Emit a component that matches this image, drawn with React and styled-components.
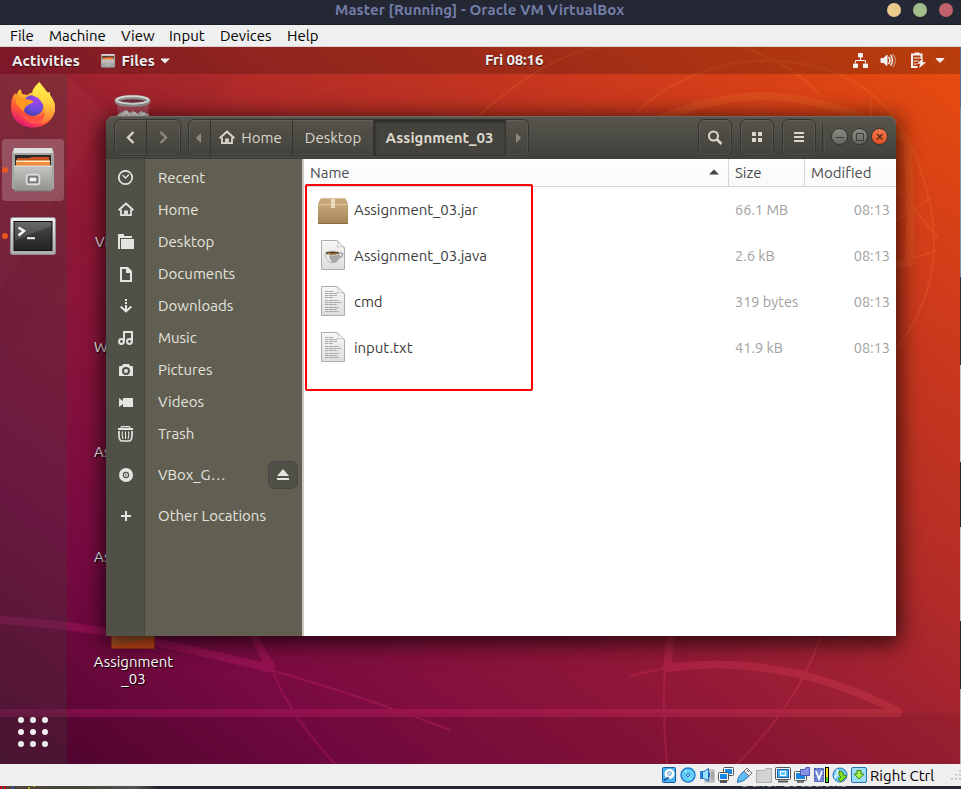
import React from "react";
import styled, { createGlobalStyle } from "styled-components";

const GlobalStyle = createGlobalStyle`
  * { box-sizing: border-box; }
  html, body { margin: 0; padding: 0; overflow: hidden; background: #242734; }
  body { font-family: Ubuntu, "Noto Sans", "Open Sans", sans-serif; font-size: 15px; }
  svg { display: block; flex: none; }
`;

const Screen = styled.div`
  width: 961px;
  height: 789px;
  display: flex;
  flex-direction: column;
  overflow: hidden;
`;

const TitleBar = styled.header`
  height: 25px;
  flex: none;
  display: grid;
  grid-template-columns: 335px 1fr auto;
  align-items: start;
  background: #242734;
  border-bottom: 1px solid #1b1d28;
`;

const TitleText = styled.div`
  grid-column: 2;
  line-height: 20px;
  font-weight: 700;
  font-size: 15px;
  letter-spacing: 0.06px;
  color: #727da8;
  white-space: nowrap;
`;

const TitleButtons = styled.div`
  display: flex;
  gap: 12px;
  padding: 3px 8px 0 0;
`;

const Dot = styled.span`
  width: 14px;
  height: 14px;
  border-radius: 50%;
  background: ${(p) => p.$color};
`;

const MenuBar = styled.nav`
  height: 22px;
  flex: none;
  display: grid;
  grid-template-columns: 39px 72px 48px 51px 67px 60px;
  padding-left: 10px;
  background: #efefef;
  border-bottom: 1px solid #d4d4d4;
`;

const MenuItem = styled.span`
  font-size: 15px;
  line-height: 22px;
  color: #000;
`;

const Middle = styled.div`
  display: flex;
  height: 717px;
  flex: none;
`;

const HostEdge = styled.div`
  width: 1px;
  background: linear-gradient(#4f6d96 0 60px, #7d8fb0 60px 230px, #2a2f3c 230px 318px, #c8c8c8 318px 415px, #242734 415px 480px, #c8c8c8 480px 574px, #242734 574px 642px, #b8b8b8 642px);
`;

const Desktop = styled.main`
  position: relative;
  width: 960px;
  height: 717px;
  display: grid;
  grid-template-rows: 27px 1fr;
  overflow: hidden;
  background: linear-gradient(to top right, #4c0530 0%, #5c0635 6%, #780a42 19%, #921837 41%, #9e2033 50%, #b22c27 61%, #cd3a1c 80%, #e94d0d 100%);
`;

const Wallpaper = styled.svg`
  position: absolute;
  inset: 0;
`;

const TopPanel = styled.div`
  position: relative;
  display: grid;
  grid-template-columns: 89px 396px 1fr auto;
  padding-left: 12px;
  background: rgba(0, 0, 0, 0.2);
  color: #f2f2f2;
  font-weight: 700;
  font-size: 15px;
  line-height: 28px;
  text-shadow: 0 1px 1px rgba(0, 0, 0, 0.6);
`;

const PanelText = styled.span`
  white-space: nowrap;
  letter-spacing: 0.12px;
`;

const PanelApp = styled.div`
  display: flex;
  align-items: center;
  gap: 6.5px;
`;

const PanelClock = styled.div`
  margin-left: -12px;
  letter-spacing: -0.15px;
  line-height: 26px;
`;

const Work = styled.div`
  position: relative;
  display: flex;
`;

const Dock = styled.aside`
  width: 67px;
  display: flex;
  flex-direction: column;
  background: rgba(70, 60, 60, 0.3);
  align-items: center;
  padding: 0 1px 17px 0;
`;

const DockItem = styled.div`
  position: relative;
  display: flex;
  align-items: center;
  justify-content: center;
  width: 62px;
  height: 62px;
  flex: none;
  margin-bottom: ${(p) => p.$gap || 0}px;
  border-radius: 4px;
  background: ${(p) => (p.$active ? "rgba(255,255,255,.2)" : "transparent")};
`;

const Running = styled.i`
  position: absolute;
  left: 0;
  top: 28px;
  width: 6px;
  height: 6px;
  border-radius: 50%;
  background: #e95420;
`;

const AppsGrid = styled.div`
  margin-top: auto;
  display: grid;
  grid-template-columns: repeat(3, 6px);
  gap: 6px;
`;

const AppDot = styled.i`
  width: 6px;
  height: 6px;
  border-radius: 50%;
  background: #f0f0f0;
`;

/* Desktop icons sit on the free desktop canvas behind the window. */
const DeskItem = styled.div`
  position: absolute;
  left: ${(p) => p.$x}px;
  top: ${(p) => p.$y}px;
  width: ${(p) => p.$w || 80}px;
  text-align: ${(p) => (p.$w ? "left" : "center")};
  font-size: 15px;
  line-height: 17px;
  color: #fff;
  text-shadow: 1px 1px 1px #000;
`;

const Window = styled.section`
  position: absolute;
  left: 106px;
  top: 42px;
  width: 790px;
  height: 520px;
  display: grid;
  grid-template-rows: 43px 1fr;
  border-radius: 8px 8px 0 0;
  box-shadow: 0 4px 22px 3px rgba(0, 0, 0, 0.72);
`;

const HeaderBar = styled.div`
  display: flex;
  padding: 3px 8.5px 4px 8px;
  border-radius: 8px 8px 0 0;
  background: linear-gradient(#58564e, #403f3a);
  box-shadow: inset 0 1px 0 #6b6960;
`;

const ButtonGroup = styled.div`
  display: flex;
  height: 37px;
  border: 1px solid #35342f;
  border-radius: 6px;
  overflow: hidden;
  margin-right: ${(p) => p.$gap}px;
  background: linear-gradient(#55534b, #43423c);
  box-shadow: inset 0 0 0 1px rgba(255, 255, 255, 0.07), 0 1px 0 rgba(255, 255, 255, 0.06);
`;

const Segment = styled.div`
  width: ${(p) => p.$w}px;
  display: flex;
  align-items: center;
  justify-content: center;
  gap: 6px;
  padding-right: ${(p) => p.$pad || 0}px;
  border-right: ${(p) => (p.$last ? 0 : 1)}px solid #34332e;
  background: ${(p) => (p.$pressed ? "#43423c" : "transparent")};
  box-shadow: ${(p) => (p.$pressed ? "inset 1px 2px 3px rgba(0,0,0,.4)" : "none")};
  color: #dad7cd;
  font-size: 15px;
  font-weight: ${(p) => (p.$pressed ? 700 : 400)};
  white-space: nowrap;
`;

const Spacer = styled.div`
  flex: 1;
`;

const Divider = styled.div`
  width: 3px;
  height: 29px;
  margin: 4px 5.5px 0 0;
  border-left: 1px solid #38372f;
  border-right: 1px solid #504f48;
`;

const WindowButtons = styled.div`
  display: flex;
  gap: 3px;
  padding-top: 9px;
`;

const RoundButton = styled.div`
  width: 17px;
  height: 17px;
  border-radius: 50%;
  border: 1px solid #33322d;
  background: ${(p) => (p.$close ? "linear-gradient(#f57b4f,#e2501d)" : "linear-gradient(#8b8a83,#67665f)")};
`;

const WindowBody = styled.div`
  display: grid;
  grid-template-columns: 196px 2px 592px;
  min-height: 0;
`;

const Sidebar = styled.div`
  padding-top: 3px;
  background: linear-gradient(90deg, #515048 0 38px, #47463f 38px 39px, #615f52 39px);
`;

const Place = styled.div`
  display: grid;
  grid-template-columns: 39px 1fr auto;
  align-items: center;
  height: 32px;
  margin-top: ${(p) => p.$gap || 0}px;
  padding-right: 4px;
  color: #e5e4df;
`;

const PlaceIcon = styled.span`
  display: flex;
  padding-left: 12px;
`;

const PlaceLabel = styled.span`
  padding-left: 13px;
  white-space: nowrap;
  font-size: 15px;
  line-height: 20px;
`;

const Eject = styled.div`
  width: 30px;
  height: 28px;
  display: flex;
  align-items: center;
  justify-content: center;
  border: 1px solid #46453f;
  border-radius: 7px;
  background: #515048;
`;

const PaneEdge = styled.div`
  background: #cbc8c4;
`;

const FilePane = styled.div`
  position: relative;
  background: #fff;
`;

const ColumnHead = styled.div`
  display: grid;
  grid-template-columns: 425px 76px 91px;
  height: 28px;
  border-bottom: 1px solid #d8d7d5;
  background: linear-gradient(#fff, #f9f9f9);
`;

const Column = styled.div`
  display: flex;
  align-items: center;
  justify-content: space-between;
  padding: 0 9px 0 6px;
  border-right: ${(p) => (p.$last ? 0 : 1)}px solid #d8d7d5;
  color: #4d4d4d;
  font-size: 15px;
`;

const FileRow = styled.div`
  display: grid;
  grid-template-columns: 50px 381px 1fr auto;
  align-items: center;
  height: 46px;
  padding-right: 6px;
  font-size: 15px;
  line-height: 20px;
  color: #3d3d3d;
`;

const FileIcon = styled.span`
  padding-left: 13px;
`;

const FileName = styled.span`
  letter-spacing: -0.05px;
`;

const FileMeta = styled.span`
  color: #a0a0a0;
  font-size: 14.5px;
`;

const Highlight = styled.div`
  position: absolute;
  left: 1px;
  top: 25px;
  width: 228px;
  height: 207px;
  border: 2px solid #fb0007;
  border-radius: 2px;
`;

const StatusBar = styled.footer`
  height: 22px;
  flex: none;
  display: flex;
  align-items: center;
  justify-content: flex-end;
  gap: 3px;
  background: #efefef;
`;

const HostKey = styled.span`
  width: 76px;
  font-size: 15px;
  line-height: 20px;
  padding-top: 2px;
  color: #000;
  white-space: nowrap;
`;

const HostStrip = styled.div`
  height: 3px;
  overflow: hidden;
  display: grid;
  grid-template-columns: 160px 579px 1fr;
  background: linear-gradient(90deg, #54453b, #44443a 80px, #55534f 135px, #25262d 157px, #242734 158px);
`;

const HostText = styled.span`
  grid-column: 3;
  margin-top: -13px;
  line-height: 18px;
  font-size: 15px;
  color: #8a8d98;
`;

const WallpaperArt = () => (
  <Wallpaper width="960" height="717" viewBox="0 47 960 717" fill="none">
    <defs>
      <linearGradient id="band" gradientUnits="userSpaceOnUse" x1="0" x2="900" y1="0" y2="0">
        <stop stopColor="#d01d7a" /><stop offset=".6" stopColor="#e1286c" /><stop offset="1" stopColor="#e54b55" />
      </linearGradient>
    </defs>
    <path d="M0 713H960V764H0Z" fill="#000" opacity=".06" />
    <path d="M67 74L108 114 0 290V74Z" fill="#fff" opacity=".025" />
    <path d="M0 160L67 74H240L106 225 0 360Z" fill="#000" opacity=".025" />
    <g stroke="url(#band)" opacity=".28" strokeLinejoin="bevel">
      <path d="M0 620Q60 624 106 632T273 669Q263 656 252 632" strokeWidth="8" />
      <path d="M0 713.010H901C820 670 740 658 667 668L671 630" strokeWidth="8" />
      <path d="M274 674Q290 715 335 764M270 670Q350 692 450 730" strokeWidth="2" />
      <path d="M823 630Q800 702 737 764M665 668Q662 710 667 764M630 676Q654 670 668 668" strokeWidth="2" />
    </g>
    <g stroke="#ff8b37" opacity=".16">
      <path d="M660 119C745 82 818 91 907 139Q912 200 909 262L890 266" strokeWidth="8" />
      <path d="M636 112Q705 52 791 62T912 148Q965 270 890 356M475 119Q550 52 600 47M742 47Q800 68 820 96M871 98V120M932 197L890 225M938 238L890 180M936 251L890 265" strokeWidth="2" />
    </g>
  </Wallpaper>
);

const CabinetIcon = ({ size, h }) => (
  <svg width={size} height={h || size} viewBox="0 0 42 44" preserveAspectRatio="none">
    <defs>
      <linearGradient id={"cab" + size} x2="0" y2="1">
        <stop stopColor="#c4c4c2" /><stop offset="1" stopColor="#92928f" />
      </linearGradient>
    </defs>
    <path d="M2 0H40L42 5V41H0V5Z" fill="#a5a5a2" />
    <path d="M2 0H40L41 5H1Z" fill="#dededc" />
    <path d="M3 7H39V18H3Z" fill="#292a28" />
    <path d="M5 10H17L20 9H37V20H4Z" fill="#c9511d" />
    <path d="M4 12.500H38V14H4Z" fill="#fff0c6" />
    <path d="M4 14H38V18H4Z" fill="#f0893a" />
    <path d="M2 18H40V43H2Z" fill={"url(#cab" + size + ")"} />
    <path d="M2 18H40" stroke="#e5e5e3" />
    <path d="M2 43H40" stroke="#757572" />
    <rect x="14.5" y="26.5" width="13" height="10" rx="2" fill="#aaa" stroke="#ddd" strokeWidth="1.4" />
    <rect x="17" y="29" width="8" height="5" fill="#f3f3f3" stroke="#4a4a4a" />
  </svg>
);

const FirefoxIcon = () => (
  <svg width="46" height="48" viewBox="0 0 46 48">
    <defs>
      <linearGradient id="ffBody" x1=".85" y1=".1" x2=".3" y2="1">
        <stop stopColor="#fff44f" /><stop offset=".35" stopColor="#ffb02c" /><stop offset=".65" stopColor="#ff5a35" /><stop offset="1" stopColor="#e5127c" />
      </linearGradient>
      <radialGradient id="ffOrb" cx=".65" cy=".25" r=".8">
        <stop stopColor="#a545ef" /><stop offset=".6" stopColor="#6b4ddb" /><stop offset="1" stopColor="#473eb0" />
      </radialGradient>
      <linearGradient id="ffTail" x2="0" y2="1">
        <stop stopColor="#fff34d" /><stop offset=".5" stopColor="#ffd23c" /><stop offset="1" stopColor="#ff7138" />
      </linearGradient>
    </defs>
    <path d="M9 9C10 7 12 10 12 13L18 14Q20 11 23 12C30 4 36 9 40 14Q46 22 45 29C43 40 34 46.500 23 46.500 10 46.500 0 37 1 25Q1 17 5 12L6 14Z" fill="url(#ffBody)" />
    <circle cx="23" cy="24.500" r="10.500" fill="url(#ffOrb)" />
    <path d="M29.500 1C32 5 36 8 37 12L40 11 40 14Q46 22 45 29C43 39 35 43 28 42 36 37 37 28 32 22Q29 16 23 15C20 10 26 4 29.500 1Z" fill="url(#ffTail)" />
    <path d="M6 16L18 18.500Q24 19 23 21.500L18 24Q14 26 14 31 9 26 6 22Z" fill="#ff9820" />
    <path d="M10 28C15 39 28 40 34 31Q35 43 22 43 13 41 10 28Z" fill="#ff5146" />
  </svg>
);

const TerminalIcon = () => (
  <svg width="46" height="38" viewBox="0 0 46 38">
    <defs>
      <linearGradient id="term" x2="0" y2="1"><stop stopColor="#555" /><stop offset=".5" stopColor="#353535" /><stop offset="1" stopColor="#232323" /></linearGradient>
      <linearGradient id="termFrame" x2="0" y2="1"><stop stopColor="#efefef" /><stop offset="1" stopColor="#ababab" /></linearGradient>
    </defs>
    <rect x=".5" y=".5" width="45" height="37" rx="2" fill="url(#termFrame)" stroke="#8d8d8d" />
    <rect x="4" y="4.500" width="38" height="29" fill="url(#term)" stroke="#111" />
    <path d="M22 5H41V9Q25 15 5 24V5Z" fill="#fff" opacity=".12" />
    <path d="M8.500 10.500L14 14 8.500 18.500" fill="none" stroke="#f4f4f4" strokeWidth="2.500" />
    <path d="M17 21.200H25" stroke="#f4f4f4" strokeWidth="2" />
  </svg>
);

const TrashCan = () => (
  <svg width="38" height="40" viewBox="0 0 38 40">
    <path d="M3 8L6 38H32L35 8Z" fill="#b06672" opacity=".6" />
    <path d="M3 20L8 17 12 15 15 18 19 16 23 19 27 16 31 18 35 19 33 38H5Z" fill="#c9c9c7" />
    <path d="M8 21L13 17 16 22 21 18 25 22 31 18" fill="none" stroke="#eee" strokeWidth="2" />
    <ellipse cx="18.500" cy="6" rx="16" ry="3.800" fill="#713039" stroke="#92928f" strokeWidth="4" />
    <ellipse cx="18.500" cy="5" rx="16" ry="3.800" fill="none" stroke="#dededc" strokeWidth="1.800" />
  </svg>
);

const placeShapes = {
  recent: <g><circle cx="7.500" cy="7.500" r="6.700" fill="none" stroke="currentColor" strokeWidth="1.700" /><path d="M4.500 5L7.500 8 11 4.500" fill="none" stroke="currentColor" strokeWidth="1.300" /></g>,
  home: (
    <g fill="none" stroke="currentColor">
      <path d="M.6 8.200L8 1.600 15.400 8.200" strokeWidth="2" />
      <path d="M3 7.500V13.200H7V9.500H9V13.200H13V7.500" strokeWidth="1.800" />
    </g>
  ),
  folder: <path d="M0 0H6V2H14V4H2V15H0ZM3 5H16V15H3Z" fill="currentColor" />,
  doc: <path d="M2 1H10L14 5V16H2ZM4 3V14H12V7H8V3Z" fill="currentColor" fillRule="evenodd" />,
  down: <g fill="none" stroke="currentColor" strokeWidth="2"><path d="M8 1V7" strokeDasharray="2 1" /><path d="M8 7V13M2.700 8.500L8 13.500 13.300 8.500" /></g>,
  music: <g fill="none" stroke="currentColor" strokeWidth="2"><path d="M6 11V2H14V11" /><circle cx="3.500" cy="11.500" r="2.400" /><circle cx="11.500" cy="11.500" r="2.400" /></g>,
  camera: <path d="M5 2H11L12 4H14Q15 4 15 5V14H1V5Q1 4 2 4H4ZM8 5A4 4 0 108 13A4 4 0 108 5ZM8 7A2 2 0 118 11A2 2 0 118 7Z" fill="currentColor" fillRule="evenodd" />,
  video: <path d="M1 4L5 7V4H15V13H5V10L1 13Z" fill="currentColor" />,
  trash: <g fill="none" stroke="currentColor"><path d="M0 3H15" strokeWidth="2" /><path d="M2.500 1.500L4 .7H11L12.500 1.500" strokeWidth="1.300" /><path d="M1 5V10Q1.500 15 4 15H11Q13.500 15 14 10V5" strokeWidth="1.700" /><path d="M4.500 5.500Q3.500 9 5 13M7.500 5.500V13M10.500 5.500Q11.500 9 10 13" strokeWidth="1.100" /></g>,
  disc: <g><circle cx="8" cy="8" r="7" fill="currentColor" /><circle cx="8" cy="8" r="2.600" fill="none" stroke="#515048" strokeWidth="1.200" /><circle cx="8" cy="8" r=".8" fill="#515048" /></g>,
  plus: <path d="M8 3V13M3 8H13" stroke="currentColor" strokeWidth="2" />,
};

const Glyph = ({ name, size = 16 }) => (
  <svg width={size} height={size} viewBox="0 0 16 16">{placeShapes[name]}</svg>
);

const places = [
  { icon: "recent", label: "Recent" },
  { icon: "home", label: "Home" },
  { icon: "folder", label: "Desktop" },
  { icon: "doc", label: "Documents" },
  { icon: "down", label: "Downloads" },
  { icon: "music", label: "Music" },
  { icon: "camera", label: "Pictures" },
  { icon: "video", label: "Videos" },
  { icon: "trash", label: "Trash" },
  { icon: "disc", label: "VBox_G…", gap: 9, eject: true },
  { icon: "plus", label: "Other Locations", gap: 9 },
];

const PackageIcon = () => (
  <svg width="32" height="32" viewBox="0 0 32 32">
    <defs><linearGradient id="box" x2="0" y2="1"><stop stopColor="#cfb285" /><stop offset="1" stopColor="#a58456" /></linearGradient></defs>
    <path d="M4 4H28L31 10V30H1V10Z" fill="url(#box)" />
    <path d="M4 4.500H28L31 10H1Z" fill="#c7a777" />
    <path d="M1 10.500H31M4 4.500H28" stroke="#dbc49e" />
    <path d="M1 29.500H31" stroke="#8c6d43" />
    <path d="M14 5H18V14H14Z" fill="#eadbc2" />
  </svg>
);

const PageIcon = ({ java }) => (
  <svg width="32" height="32" viewBox="0 0 32 32">
    <defs><linearGradient id="sheet" x2="0" y2="1"><stop stopColor="#f8f8f7" /><stop offset="1" stopColor="#dddddc" /></linearGradient></defs>
    <path d="M4.500 .500H20L27.500 8V29.500H4.500Z" fill="url(#sheet)" stroke="#adadad" />
    <path d="M20 .500Q23 4 20 7.500 25 5 27.500 8Z" fill="#fff" stroke="#bbb" strokeWidth=".8" />
    {java ? (
      <g transform="translate(0 -1)">
        <path d="M22 14Q27 13 25 17 23 19 20 19" fill="none" stroke="#999" strokeWidth="1.300" />
        <path d="M8 14Q9 22 14 24H18Q23 22 23 14Z" fill="#a8a8a8" />
        <path d="M9 16Q10 22 14 23H15Q12 20 12 16Z" fill="#eee" />
        <ellipse cx="15.500" cy="14" rx="7.500" ry="2" fill="#5b3d22" stroke="#ddd" />
        <path d="M11 14.500Q16 16 20 14.500" stroke="#c28a3f" fill="none" />
      </g>
    ) : (
      <g stroke="#aaa" strokeWidth="1" strokeDasharray="3 .5 5 .4">
        <path d="M8 5.500H17M8 7.500H20M8 9.500H20M8 11.500H16M8 14.500H22M8 16.500H24M8 18.500H20M8 21.500H22M8 23.500H20M8 25.500H22" />
      </g>
    )}
  </svg>
);

const files = [
  { name: "Assignment_03.jar", size: "66.1 MB", icon: <PackageIcon /> },
  { name: "Assignment_03.java", size: "2.6 kB", icon: <PageIcon java /> },
  { name: "cmd", size: "319 bytes", icon: <PageIcon /> },
  { name: "input.txt", size: "41.9 kB", icon: <PageIcon /> },
];

const Monitor = ({ x = 0, y = 0, w = 10, h = 8 }) => (
  <g><rect x={x + 0.5} y={y + 0.5} width={w} height={h} rx="1" fill="#fff" stroke="#555" /><rect x={x + 2} y={y + 2} width={w - 3} height={h - 3} fill="#1688e4" /></g>
);

const statusIcons = [
  <g><rect x="1.500" y=".5" width="13" height="15" rx="1" fill="#4ab2f1" stroke="#1559a8" /><circle cx="8.500" cy="7" r="5" fill="#fff" /><circle cx="8.500" cy="6.500" r="1.700" fill="none" stroke="#3279bd" /><path d="M3 13.500L5 12 8 10.500" stroke="#1559a8" strokeWidth="1.700" fill="none" /></g>,
  <g><circle cx="8" cy="8" r="7" fill="#62cdf8" stroke="#207dce" strokeWidth="1.400" /><path d="M8 8L5 3M8 8L11 13" stroke="#8de0ff" strokeWidth="2" /><circle cx="8" cy="8" r="1.500" fill="#bff0ff" stroke="#1769ba" /></g>,
  <g><path d="M10 3H15V15H6V13H10Z" fill="#c9c9c9" stroke="#aaa" /><path d="M12 6H15M12 8H15M12 10H15M12 12H15" stroke="#888" /><path d="M1 4H3V12H1Z" fill="#2b83cc" /><path d="M3.500 4.500H5L9.500 1.500V14L5 11.500H3.500Z" fill="#9be1ff" stroke="#1769ba" /><path d="M10.500 6V10" stroke="#1769ba" /></g>,
  <g><Monitor x={5} y={0} w={10} h={8} /><Monitor x={0} y={5} w={10} h={8} /><path d="M2 15H9" stroke="#555" strokeWidth="2" /></g>,
  <g><path d="M.500 15.500Q0 10 7 4L12 9Q7 15 .500 15.500Z" fill="#60bdf3" stroke="#276fb2" /><path d="M7 4L10 1 15 6 12 9Z" fill="#ececec" stroke="#777" /><path d="M10 3L12 5" stroke="#555" /></g>,
  <path d="M.500 3.500H8L10 1.500H15.500V15.500H.500Z" fill="#d3d3d3" stroke="#b0b0b0" />,
  <g><rect x=".5" y=".5" width="15" height="12" rx="1" fill="#fff" stroke="#555" /><rect x="2.500" y="2.500" width="11" height="8" fill="#4db3f2" stroke="#1660af" /><rect x="5.500" y="4.500" width="5" height="4" fill="#5dc7ff" stroke="#fff" /><path d="M3 14.500H13" stroke="#555" strokeWidth="2" /></g>,
  <g><Monitor x={0} y={4} w={12} h={9} /><path d="M6.500 2.500H11L12 .500H15.500V8.500H6.500Z" fill="#8793e4" stroke="#4b57b2" /><path d="M3 15H10" stroke="#555" strokeWidth="1.500" /></g>,
  <g><rect x="1.500" y="1.500" width="9" height="13" fill="#6f82d6" stroke="#31479f" strokeDasharray="2 1" /><path d="M3 4L6 12 9 4" fill="none" stroke="#fff" strokeWidth="1.700" /><rect x="12.500" y=".5" width="3" height="15" fill="#45d41f" stroke="#000" /><path d="M14 1V10" stroke="#f5df29" strokeWidth="2" /></g>,
  <g><circle cx="8" cy="8" r="7" fill="#6fc9f7" stroke="#2775b7" /><path d="M2 9Q5 7 4 3 8 1 7 8L3 12" fill="#cdeffc" /><path d="M7 4Q12 4 11 8L15 9 9 15 6 12 9 10 7 8Z" fill="#81dc26" stroke="#3f8c0d" /></g>,
  <g><rect x=".5" y=".5" width="15" height="15" rx="1.500" fill="#9bdcf8" stroke="#2772b5" /><path d="M6 3.500H10V7H13L8 12 3 7H6Z" fill="#a8f04c" stroke="#338b0b" /></g>,
];

export default function App() {
  return (
    <Screen>
      <GlobalStyle />
      <TitleBar>
        <TitleText>Master [Running] - Oracle VM VirtualBox</TitleText>
        <TitleButtons>
          <Dot $color="#ebcb8b" /><Dot $color="#a3be8c" /><Dot $color="#bf616a" />
        </TitleButtons>
      </TitleBar>
      <MenuBar>
        {["File", "Machine", "View", "Input", "Devices", "Help"].map((m) => <MenuItem key={m}>{m}</MenuItem>)}
      </MenuBar>
      <Middle>
        <Desktop>
          <WallpaperArt />
          <TopPanel>
            <PanelText>Activities</PanelText>
            <PanelApp>
              <CabinetIcon size={14} />
              <PanelText>Files</PanelText>
              <svg width="10" height="10" viewBox="0 0 10 10"><path d="M-1 2.500H9L4 7.500Z" fill="#f2f2f2" /></svg>
            </PanelApp>
            <PanelClock>Fri 08:16</PanelClock>
            <svg width="108" height="27" viewBox="-.5 0 108 27">
              <g fill="#f2f2f2" stroke="#f2f2f2">
                <path d="M6 6.500H10V10H6ZM1 17H5V20.500H1ZM11 17H15V20.500H11Z" />
                <path d="M8 10V13.500M3 16V13.500H13V16" fill="none" />
                <path d="M28.500 11.500H31L34.500 8V18.500L31 15.500H28.500Z" />
                <path d="M36 10Q39 13.500 36 17M38 8Q42 13.500 38 18.500" fill="none" strokeWidth="1.500" />
                <path d="M40 7Q46 13.500 40 20" fill="none" strokeWidth="1.300" opacity=".45" />
                <path d="M65 20H59.500V7.500H69V12M62 6.500H67" fill="none" strokeWidth="2" />
                <path d="M61 11H68M61 14H66M61 17H64" strokeWidth="1.200" />
                <path d="M70 12L65 16.500H68L67 20.500 73 15.500H70Z" strokeWidth=".5" />
                <path d="M83.500 11.500H91.500L87.500 15.500Z" />
              </g>
            </svg>
          </TopPanel>
          <Work>
            <Dock>
              <DockItem $gap={3}><FirefoxIcon /></DockItem>
              <DockItem $active $gap={4}><Running /><CabinetIcon size={42} h={44} /></DockItem>
              <DockItem><Running /><TerminalIcon /></DockItem>
              <AppsGrid>{Array.from({ length: 9 }, (_, i) => <AppDot key={i} />)}</AppsGrid>
            </Dock>
            <DeskItem $x={114} $y={21} $w={38}><TrashCan /></DeskItem>
            <DeskItem $x={95} $y={159} $w={50}>VBox</DeskItem>
            <DeskItem $x={94} $y={264} $w={50}>Work</DeskItem>
            <DeskItem $x={94} $y={369} $w={80}>Assign</DeskItem>
            <DeskItem $x={94} $y={474} $w={80}>Assign</DeskItem>
            <DeskItem $x={111} $y={550} $w={45}>
              <svg width="45" height="26" viewBox="0 0 45 26"><path d="M.500 0H43.500V24.500H.500Z" fill="#c84a18" stroke="#9e2e16" /><path d="M1 12H43V14L1 22Z" fill="#a96232" opacity=".6" /></svg>
            </DeskItem>
            <DeskItem $x={93.5} $y={579}>Assignment<br />_03</DeskItem>

            <Window>
              <HeaderBar>
                <ButtonGroup $gap={7}>
                  <Segment $w={32}><svg width="16" height="16"><path d="M10.500 2L5 7.500 10.500 13" fill="none" stroke="#dad7cd" strokeWidth="2.300" /></svg></Segment>
                  <Segment $w={33} $last><svg width="16" height="16"><path d="M4.500 2L10 7.500 4.500 13" fill="none" stroke="#8c8a81" strokeWidth="2.300" /></svg></Segment>
                </ButtonGroup>
                <ButtonGroup $gap={0}>
                  <Segment $w={22} $pad={2}><svg width="8" height="10"><path d="M6 0V10L1 5Z" fill="#8c8a81" /></svg></Segment>
                  <Segment $w={82} $pad={2}><Glyph name="home" />Home</Segment>
                  <Segment $w={81}>Desktop</Segment>
                  <Segment $w={132} $pressed>Assignment_03</Segment>
                  <Segment $w={22} $last><svg width="8" height="10"><path d="M3 0V10L8 5Z" fill="#8c8a81" /></svg></Segment>
                </ButtonGroup>
                <Spacer />
                <ButtonGroup $gap={8}><Segment $w={32} $last><svg width="16" height="16"><circle cx="6.500" cy="6" r="4.500" fill="none" stroke="#dad7cd" strokeWidth="2" /><path d="M10 9.500L14.500 14" stroke="#dad7cd" strokeWidth="2.500" /></svg></Segment></ButtonGroup>
                <ButtonGroup $gap={8}><Segment $w={32} $last><svg width="16" height="16"><path d="M3 2H7V6H3ZM9 2H13V6H9ZM3 8H7V12H3ZM9 8H13V12H9Z" fill="#dad7cd" /></svg></Segment></ButtonGroup>
                <ButtonGroup $gap={6}><Segment $w={32} $last><svg width="16" height="16"><path d="M3 3H13M3 7H13M3 11H13" stroke="#dad7cd" strokeWidth="2" /></svg></Segment></ButtonGroup>
                <Divider />
                <WindowButtons>
                  <RoundButton><svg width="15" height="15"><path d="M4 8.500H12" stroke="#3c3b37" /></svg></RoundButton>
                  <RoundButton><svg width="15" height="15"><path d="M4.500 4.500H11.500V11.500H4.500Z" fill="none" stroke="#3c3b37" /></svg></RoundButton>
                  <RoundButton $close><svg width="15" height="15"><path d="M5 5L10.500 10.500M10.500 5L5 10.500" stroke="#4b2517" strokeWidth="1.200" /></svg></RoundButton>
                </WindowButtons>
              </HeaderBar>
              <WindowBody>
                <Sidebar>
                  {places.map((p) => (
                    <Place key={p.label} $gap={p.gap}>
                      <PlaceIcon><Glyph name={p.icon} /></PlaceIcon>
                      <PlaceLabel>{p.label}</PlaceLabel>
                      {p.eject && <Eject><svg width="12" height="12"><path d="M6 0L12 7H0ZM0 9H12V11H0Z" fill="#e5e4df" /></svg></Eject>}
                    </Place>
                  ))}
                </Sidebar>
                <PaneEdge />
                <FilePane>
                  <ColumnHead>
                    <Column>Name<svg width="10" height="9"><path d="M0 6.500H10L5 1.500Z" fill="#444" /></svg></Column>
                    <Column>Size</Column>
                    <Column $last>Modified</Column>
                  </ColumnHead>
                  {files.map((f) => (
                    <FileRow key={f.name}>
                      <FileIcon>{f.icon}</FileIcon>
                      <FileName>{f.name}</FileName>
                      <FileMeta>{f.size}</FileMeta>
                      <FileMeta>08:13</FileMeta>
                    </FileRow>
                  ))}
                  <Highlight />
                </FilePane>
              </WindowBody>
            </Window>
          </Work>
        </Desktop>
        <HostEdge />
      </Middle>
      <StatusBar>
        {statusIcons.map((icon, i) => <svg key={i} width="16" height="16" viewBox="0 0 16 16">{icon}</svg>)}
        <HostKey>Right Ctrl</HostKey>
        <svg width="12" height="16"><path d="M11 3V15M7 7V15M3 11V15" stroke="#aaa" strokeWidth="1.500" strokeDasharray="1.500 2.500" /></svg>
      </StatusBar>
      <HostStrip>
        <svg width="40" height="3" viewBox="0 0 40 3"><path d="M1 0V3M5 0V3" stroke="#c00014" strokeWidth="2" /><path d="M14 0L12 3" stroke="#2b5f9e" strokeWidth="2" /><path d="M28 2H30M34 0V1" stroke="#b8930f" strokeWidth="2" /></svg>
        <HostText>Other Locations</HostText>
      </HostStrip>
    </Screen>
  );
}
